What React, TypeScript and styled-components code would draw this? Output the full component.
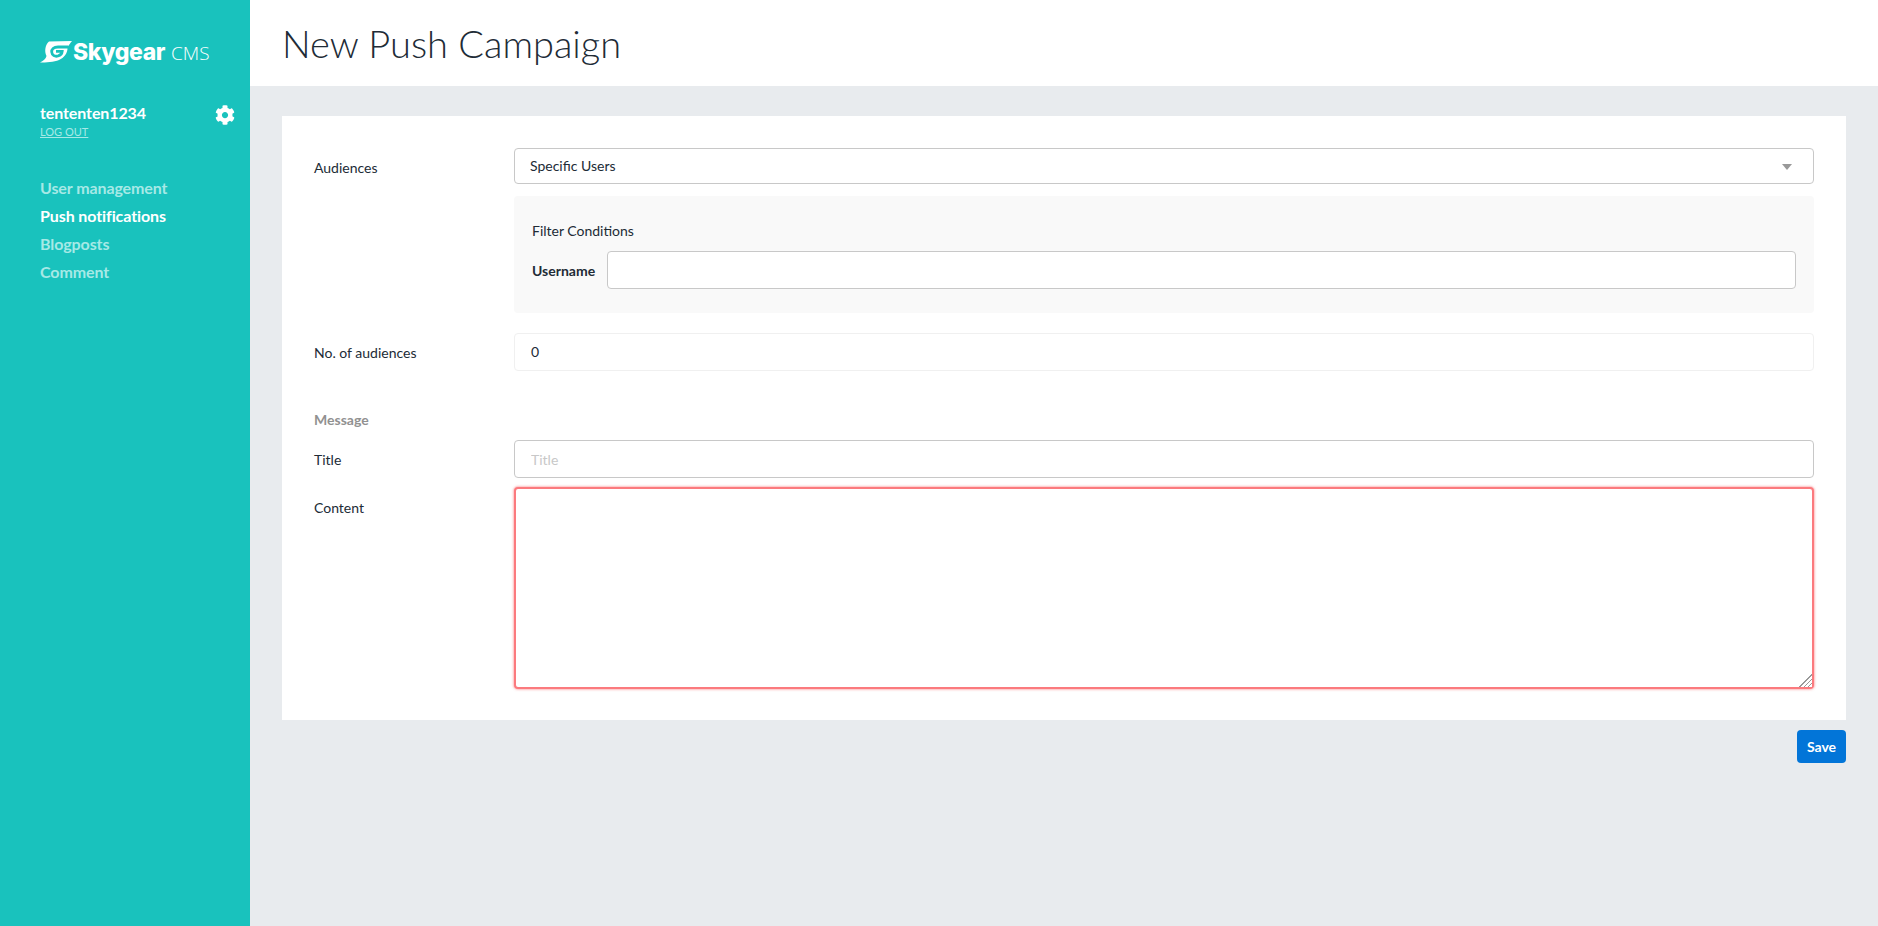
import { createGlobalStyle } from "styled-components";
import styled from "styled-components";
import { FaCog } from "react-icons/fa";

const GlobalStyle = createGlobalStyle`
  html, body {
    margin: 0;
    padding: 0;
    height: 100%;
  }
  body {
    font-family: Lato, "Open Sans", sans-serif;
    font-size: 14px;
    color: #212b36;
    background: #e8ebee;
  }
  * {
    box-sizing: border-box;
  }
`;

const Page = styled.div`
  display: flex;
  height: 926px;
  overflow: hidden;
`;

const Sidebar = styled.aside`
  width: 250px;
  flex-shrink: 0;
  background: #19c2bd;
  color: #fff;
  padding: 38px 15px 0 40px;
`;

const Logo = styled.div`
  display: flex;
  align-items: center;
  height: 28px;
  gap: 1px;
`;

const LogoName = styled.span`
  font-family: Inter, sans-serif;
  font-weight: 800;
  font-size: 23px;
  letter-spacing: -0.4px;
`;

const LogoSuffix = styled.span`
  font-family: "Open Sans", sans-serif;
  font-weight: 300;
  font-size: 19px;
  margin-left: 5px;
  margin-top: 2px;
`;

const UserRow = styled.div`
  display: flex;
  justify-content: space-between;
  align-items: flex-start;
  margin-top: 37px;
`;

const UserName = styled.div`
  font-size: 16px;
  font-weight: 700;
  line-height: 20px;
  letter-spacing: -0.1px;
`;

const LogOut = styled.a`
  display: block;
  font-size: 11px;
  line-height: 13px;
  margin-top: 2px;
  color: #a6e9e6;
  text-decoration: underline;
`;

const GearButton = styled.span`
  display: block;
  margin-top: 2px;
  font-size: 20px;
  line-height: 0;
`;

const Nav = styled.nav`
  margin-top: 36px;
  display: flex;
  flex-direction: column;
`;

const NavItem = styled.a<{ $active?: boolean }>`
  font-size: 16px;
  font-weight: 700;
  line-height: 28px;
  letter-spacing: -0.1px;
  color: ${(p) => (p.$active ? "#fff" : "#a6e9e6")};
`;

const Main = styled.main`
  flex: 1;
  min-width: 0;
`;

const Header = styled.header`
  height: 86px;
  background: #fff;
  padding-left: 32px;
  display: flex;
  align-items: center;
`;

const Title = styled.h1`
  margin: 0;
  font-size: 38px;
  font-weight: 300;
  color: #212b36;
`;

const Content = styled.div`
  padding: 30px 32px 0;
`;

const Panel = styled.section`
  background: #fff;
  padding: 32px 32px 31px;
`;

const Row = styled.div<{ $top?: number }>`
  display: grid;
  grid-template-columns: 200px 1fr;
  margin-top: ${(p) => p.$top ?? 0}px;
`;

const Label = styled.label<{ $offset?: number }>`
  line-height: 20px;
  padding-top: ${(p) => p.$offset ?? 10}px;
`;

const SelectBox = styled.div`
  position: relative;
  height: 36px;
  border: 1px solid #c8c8c8;
  border-radius: 4px;
  padding-left: 15px;
  line-height: 34px;
`;

const Caret = styled.span`
  position: absolute;
  right: 21px;
  top: 15px;
  border-style: solid;
  border-width: 6px 5px 0;
  border-color: #999 transparent transparent;
`;

const FilterBox = styled.div`
  margin-top: 12px;
  height: 117px;
  background: #f9f9f9;
  border-radius: 4px;
  padding: 25px 18px 0;
`;

const FilterTitle = styled.div`
  line-height: 20px;
`;

const FilterRow = styled.div`
  display: flex;
  align-items: center;
  gap: 12px;
  margin-top: 10px;
`;

const FilterLabel = styled.label`
  font-weight: 700;
`;

const TextInput = styled.input`
  flex: 1;
  width: 100%;
  height: 38px;
  border: 1px solid #c8c8c8;
  border-radius: 4px;
  background: #fff;
  padding: 0 16px;
  font: inherit;
  color: inherit;
  outline: none;
  &::placeholder {
    color: #c8c8c8;
  }
`;

const ReadOnlyValue = styled.div`
  height: 38px;
  border: 1px solid #f0f0f0;
  border-radius: 4px;
  padding-left: 16px;
  line-height: 36px;
`;

const SectionLabel = styled.div`
  margin-top: 39px;
  font-weight: 700;
  color: #919191;
  line-height: 20px;
`;

const ContentArea = styled.textarea`
  display: block;
  width: 100%;
  height: 202px;
  border: 2px solid #fb7a7e;
  border-radius: 4px;
  box-shadow: 0 0 2px 1px rgba(251, 122, 126, 0.5);
  outline: none;
  font: inherit;
  &::-webkit-resizer {
    background:
      linear-gradient(135deg, #fff 50%, transparent 50%),
      repeating-linear-gradient(135deg, #999 0 1px, #fff 1px 3px);
  }
`;

const Actions = styled.div`
  display: flex;
  justify-content: flex-end;
  margin-top: 10px;
`;

const SaveButton = styled.button`
  width: 49px;
  height: 33px;
  border: 0;
  border-radius: 4px;
  background: #0275d8;
  color: #fff;
  font-family: inherit;
  font-size: 14px;
  font-weight: 700;
  padding: 0;
`;

const SkygearMark = () => (
  <svg width="32" height="22" viewBox="0 0 32 22" aria-hidden="true">
    <path
      fill="#fff"
      d="M9 0.6 L32 0 C30 2.5 28.5 4.5 27.5 6 C28 12 24 17 19 19 C14 21 6 21.5 0 21.5 C3 20 6 18 6.5 15 C4 10 5.5 3.5 9 0.6 Z"
    />
    <path
      fill="none"
      stroke="#19c2bd"
      strokeWidth="2.8"
      d="M28 6 H18 C13.5 6 11.5 8.5 11.7 11 C12 14.5 15 15.8 18 15 C20.5 14.3 22 12.5 22.2 10.4 H16"
    />
  </svg>
);

export default function App() {
  return (
    <Page>
      <GlobalStyle />
      <Sidebar>
        <Logo>
          <SkygearMark />
          <LogoName>Skygear</LogoName>
          <LogoSuffix>CMS</LogoSuffix>
        </Logo>
        <UserRow>
          <div>
            <UserName>tententen1234</UserName>
            <LogOut>LOG OUT</LogOut>
          </div>
          <GearButton>
            <FaCog />
          </GearButton>
        </UserRow>
        <Nav>
          <NavItem>User management</NavItem>
          <NavItem $active>Push notifications</NavItem>
          <NavItem>Blogposts</NavItem>
          <NavItem>Comment</NavItem>
        </Nav>
      </Sidebar>
      <Main>
        <Header>
          <Title>New Push Campaign</Title>
        </Header>
        <Content>
          <Panel>
            <Row>
              <Label>Audiences</Label>
              <div>
                <SelectBox>
                  Specific Users
                  <Caret />
                </SelectBox>
                <FilterBox>
                  <FilterTitle>Filter Conditions</FilterTitle>
                  <FilterRow>
                    <FilterLabel>Username</FilterLabel>
                    <TextInput />
                  </FilterRow>
                </FilterBox>
              </div>
            </Row>
            <Row $top={20}>
              <Label>No. of audiences</Label>
              <ReadOnlyValue>0</ReadOnlyValue>
            </Row>
            <SectionLabel>Message</SectionLabel>
            <Row $top={10}>
              <Label>Title</Label>
              <TextInput placeholder="Title" />
            </Row>
            <Row $top={9}>
              <Label $offset={11}>Content</Label>
              <ContentArea />
            </Row>
          </Panel>
          <Actions>
            <SaveButton>Save</SaveButton>
          </Actions>
        </Content>
      </Main>
    </Page>
  );
}
